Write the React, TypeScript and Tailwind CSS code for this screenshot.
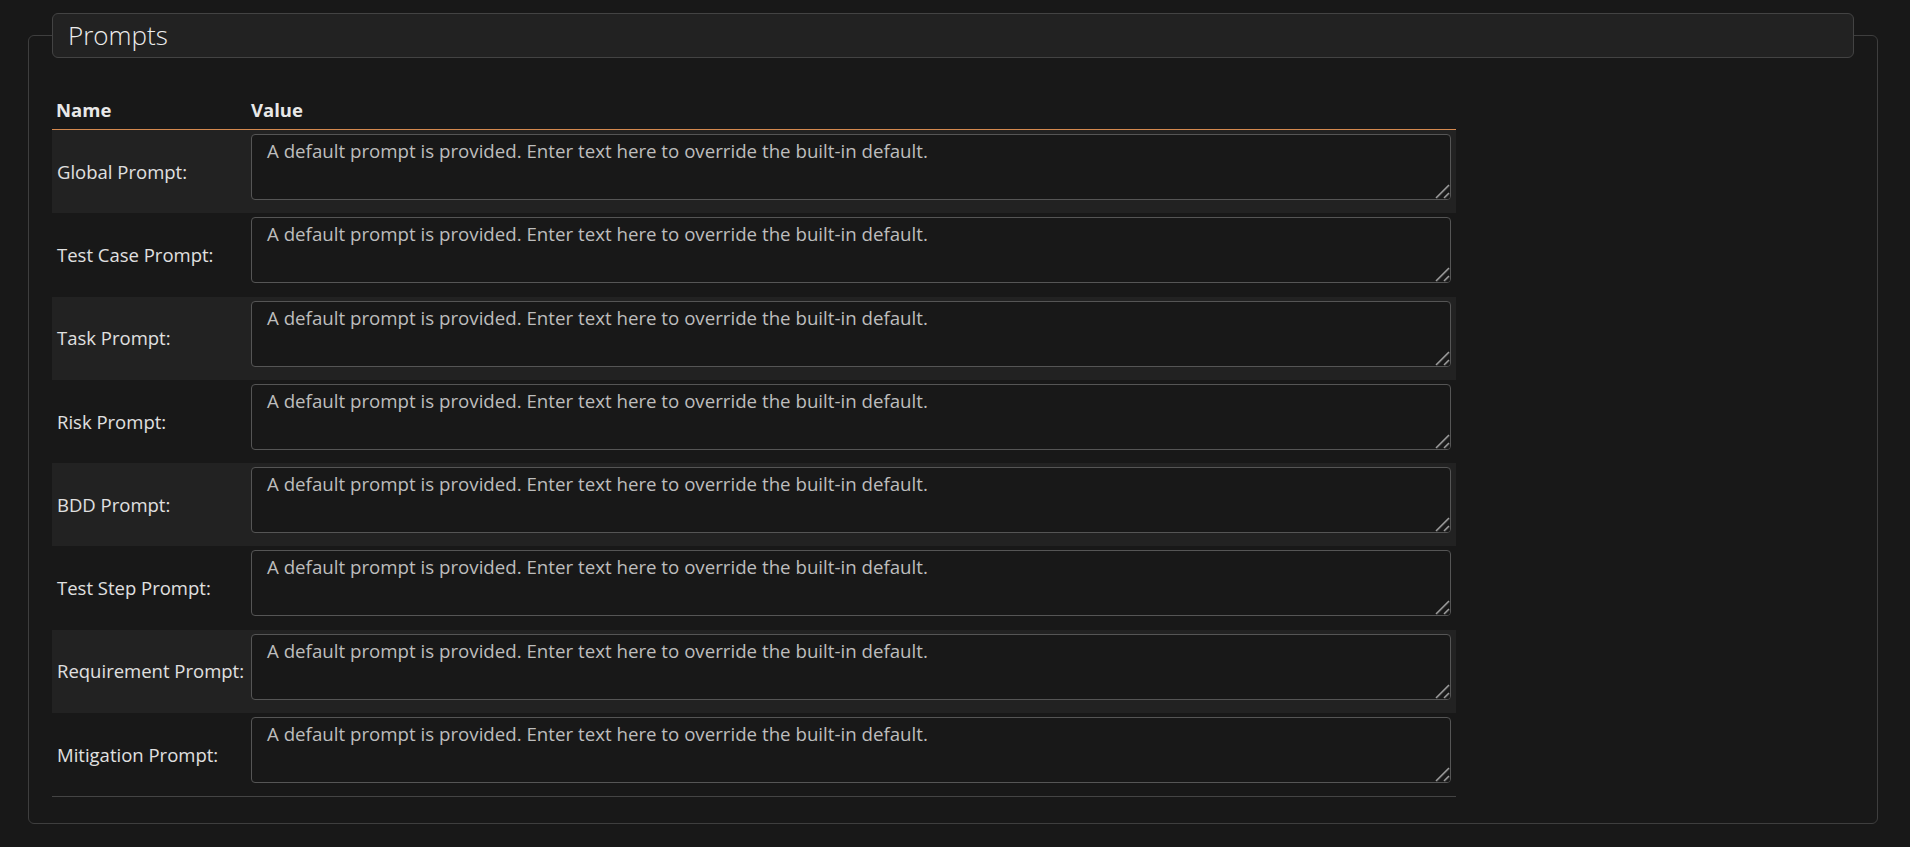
const prompts = [
  "Global Prompt:",
  "Test Case Prompt:",
  "Task Prompt:",
  "Risk Prompt:",
  "BDD Prompt:",
  "Test Step Prompt:",
  "Requirement Prompt:",
  "Mitigation Prompt:",
];

const placeholder =
  "A default prompt is provided. Enter text here to override the built-in default.";

// covers the native resizer so the grip reads like the reference
function Grip() {
  return (
    <svg
      width="15"
      height="15"
      viewBox="0 0 15 15"
      className="pointer-events-none absolute bottom-[1px] right-[1px] rounded-br-[3px] bg-[#181818]"
    >
      <path d="M1 14 L14 1" stroke="#2a2a2a" strokeWidth="1" transform="translate(1 1)" />
      <path d="M1 14 L14 1" stroke="#9c9c9c" strokeWidth="1.6" />
      <path d="M9 14 L14 9" stroke="#2a2a2a" strokeWidth="1" transform="translate(1 1)" />
      <path d="M9 14 L14 9" stroke="#9c9c9c" strokeWidth="1.6" />
    </svg>
  );
}

export default function App() {
  return (
    <div className="min-h-screen bg-[#181818] pl-[28px] pr-[32px] pt-[13px] font-['Open_Sans',sans-serif] text-[18.5px] text-[#e2e2e2]">
      <fieldset className="rounded-[6px] border border-[#3e3e3e] px-[23px] pb-[26px]">
        <legend className="box-border flex h-[45px] w-full items-center rounded-[6px] border border-[#434343] bg-[#222222] px-[15px] text-[26px] font-light text-[#ededed]">
          Prompts
        </legend>

        <table className="mt-[40px] w-[1404px] border-collapse border-b border-[#444444]">
          <thead>
            <tr className="border-b border-[#d4894f] text-left">
              <th className="w-[199px] pb-[7px] pl-[4px] align-top font-bold leading-[24px] text-[#e8e8e8]">
                Name
              </th>
              <th className="pb-[7px] align-top font-bold leading-[24px] text-[#e8e8e8]">
                Value
              </th>
            </tr>
          </thead>
          <tbody>
            {prompts.map((name, i) => (
              <tr key={name} className={i % 2 === 0 ? "bg-[#222222]" : ""}>
                <td className="pl-[5px] align-middle leading-[24px] text-[#e0e0e0]">{name}</td>
                <td className="pb-[13.3px] pr-[5px] pt-[4px]">
                  <div className="relative">
                    <textarea
                      placeholder={placeholder}
                      className="block h-[66px] w-full resize-y rounded-[4px] border border-[#555555] bg-[#181818] px-[15px] pt-[4px] text-[18.7px] leading-[24px] text-[#dddddd] outline-none placeholder:text-[#bdbdbd]"
                    />
                    <Grip />
                  </div>
                </td>
              </tr>
            ))}
          </tbody>
        </table>
      </fieldset>
    </div>
  );
}
